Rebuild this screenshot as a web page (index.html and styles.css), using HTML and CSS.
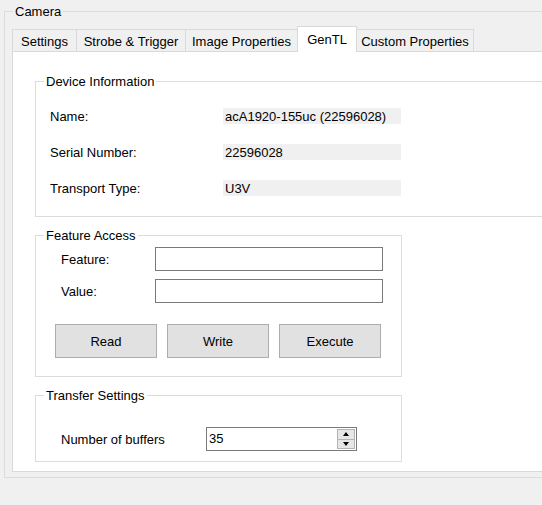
FILE: index.html
```html
<!DOCTYPE html>
<html>
<head>
<meta charset="utf-8">
<link rel="stylesheet" href="styles.css">
</head>
<body>
<div class="window">
  <fieldset class="camera">
    <legend>Camera</legend>
    <div class="cam-body">
      <div class="tabs">
        <div class="tab t-settings">Settings</div>
        <div class="tab t-strobe">Strobe &amp; Trigger</div>
        <div class="tab t-image">Image Properties</div>
        <div class="tab t-gentl sel">GenTL</div>
        <div class="tab t-custom after-sel">Custom Properties</div>
      </div>
      <div class="page">
        <fieldset class="group device">
          <legend>Device Information</legend>
          <div class="info">
            <span class="lbl">Name:</span><span class="val">acA1920-155uc (22596028)</span>
            <span class="lbl">Serial Number:</span><span class="val">22596028</span>
            <span class="lbl">Transport Type:</span><span class="val">U3V</span>
          </div>
        </fieldset>
        <fieldset class="group feature">
          <legend>Feature Access</legend>
          <div class="fields">
            <span class="lbl">Feature:</span><input class="text" type="text">
            <span class="lbl">Value:</span><input class="text" type="text">
          </div>
          <div class="buttons">
            <button class="btn">Read</button>
            <button class="btn">Write</button>
            <button class="btn">Execute</button>
          </div>
        </fieldset>
        <fieldset class="group transfer">
          <legend>Transfer Settings</legend>
          <div class="buffers">
            <span class="buf-lbl">Number of buffers</span>
            <div class="spin">
              <span class="num">35</span>
              <div class="spinbtns">
                <span class="sb"><i class="up"></i></span>
                <span class="sb"><i class="down"></i></span>
              </div>
            </div>
          </div>
        </fieldset>
      </div>
    </div>
  </fieldset>
</div>
</body>
</html>
```

FILE: styles.css
```css
html, body {
  margin: 0;
  background: #f0f0f0;
  font: 13px "Liberation Sans", Arial, sans-serif;
  color: #000;
}

.window {
  width: 542px;
  height: 505px;
  overflow: hidden;
}

fieldset {
  margin: 0;
  padding: 0;
  min-width: 0;
  border: 1px solid #dcdcdc;
}

legend {
  margin-left: 8px;
  padding: 0 2px;
  line-height: 15px;
  height: 15px;
}

.camera {
  margin: 4px 0 0 4px;
  width: 580px;
}

.cam-body {
  padding: 7px 0 5px 7px;
}

.tabs {
  display: flex;
  align-items: flex-end;
  height: 25px;
}

.tab {
  box-sizing: border-box;
  height: 22px;
  padding-top: 2px;
  line-height: 20px;
  text-align: center;
  white-space: nowrap;
  border: 1px solid #d9d9d9;
  border-bottom: 0;
  border-right: 0;
  background: #f0f0f0;
}

.tab.sel {
  height: 26px;
  line-height: 21px;
  background: #fff;
  border-right: 1px solid #d9d9d9;
  margin-bottom: -1px;
  position: relative;
  z-index: 1;
}

.tab.after-sel {
  border-left: 0;
  border-right: 1px solid #d9d9d9;
}

.t-settings { width: 64px; }
.t-strobe { width: 109px; }
.t-image { width: 112px; }
.t-gentl { width: 60px; }
.t-custom { width: 117px; }

.page {
  background: #fff;
  border: 1px solid #d9d9d9;
  padding: 22px 0 9px 22px;
}

.info {
  display: grid;
  grid-template-columns: 173px 178px;
  grid-auto-rows: 16px;
  row-gap: 20px;
  align-items: start;
  padding: 19px 0 20px 14px;
}

.info .lbl {
  box-sizing: border-box;
  height: 16px;
  padding-top: 1px;
  line-height: 16px;
}

.val {
  box-sizing: border-box;
  background: #f0f0f0;
  height: 16px;
  padding: 1px 0 0 2px;
  line-height: 16px;
  white-space: nowrap;
}

.feature,
.transfer {
  width: 367px;
  box-sizing: border-box;
  margin-top: 11px;
}

.fields {
  display: grid;
  grid-template-columns: 94px 228px;
  row-gap: 8px;
  align-items: center;
  padding: 4px 0 0 25px;
}

.text {
  box-sizing: border-box;
  width: 228px;
  height: 24px;
  margin: 0;
  padding: 0 2px;
  border: 1px solid #7a7a7a;
  background: #fff;
  font: inherit;
}

.buttons {
  display: flex;
  gap: 10px;
  padding: 21px 0 18px 19px;
}

.btn {
  width: 102px;
  height: 34px;
  margin: 0;
  padding: 0;
  background: #e1e1e1;
  border: 1px solid #adadad;
  font: inherit;
  color: #000;
}

.buffers {
  display: flex;
  align-items: center;
  padding: 24px 0 10px 25px;
}

.buf-lbl {
  width: 145px;
}

.spin {
  box-sizing: border-box;
  width: 151px;
  height: 24px;
  border: 1px solid #7a7a7a;
  background: #fff;
  display: flex;
}

.num {
  flex: 1;
  line-height: 22px;
  padding-left: 2px;
}

.spinbtns {
  width: 18px;
  margin: 1px 1px 1px 0;
  display: flex;
  flex-direction: column;
}

.sb {
  flex: 1;
  box-sizing: border-box;
  border: 1px solid #b4b4b4;
  background: #e6e6e6;
  display: flex;
  align-items: center;
  justify-content: center;
}

.sb + .sb {
  border-top: 0;
}

.up {
  width: 0;
  height: 0;
  border-left: 3px solid transparent;
  border-right: 3px solid transparent;
  border-bottom: 4px solid #000;
}

.down {
  width: 0;
  height: 0;
  border-left: 3px solid transparent;
  border-right: 3px solid transparent;
  border-top: 4px solid #000;
}
```
